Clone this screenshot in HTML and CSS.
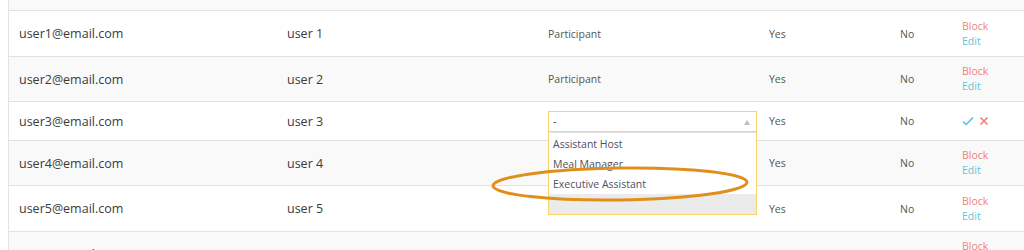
FILE: index.html
```html
<!DOCTYPE html>
<html lang="en">
<head>
    <meta charset="UTF-8">
    <title>Users</title>
    <link rel="stylesheet" href="styles.css">
</head>
<body>
    <div class="users-table">
        <div class="row row-alt">
            <div class="cell cell-email"></div>
            <div class="cell"></div>
            <div class="cell"></div>
            <div class="cell"></div>
            <div class="cell"></div>
            <div class="cell"></div>
        </div>

        <div class="row">
            <div class="cell cell-email">user1@email.com</div>
            <div class="cell cell-name">user 1</div>
            <div class="cell cell-small">Participant</div>
            <div class="cell cell-small">Yes</div>
            <div class="cell cell-small">No</div>
            <div class="cell cell-actions">
                <a class="link-block">Block</a>
                <a class="link-edit">Edit</a>
            </div>
        </div>

        <div class="row row-alt">
            <div class="cell cell-email">user2@email.com</div>
            <div class="cell cell-name">user 2</div>
            <div class="cell cell-small">Participant</div>
            <div class="cell cell-small">Yes</div>
            <div class="cell cell-small">No</div>
            <div class="cell cell-actions">
                <a class="link-block">Block</a>
                <a class="link-edit">Edit</a>
            </div>
        </div>

        <!-- row being edited -->
        <div class="row row-editing">
            <div class="cell cell-email">user3@email.com</div>
            <div class="cell cell-name">user 3</div>
            <div class="cell cell-small">
                <div class="role-select">
                    <div class="role-select-box">
                        <span>-</span>
                        <span class="role-select-arrow"></span>
                    </div>
                    <ul class="role-options">
                        <li>Assistant Host</li>
                        <li>Meal Manager</li>
                        <li>Executive Assistant</li>
                        <li class="active"></li>
                    </ul>
                </div>
            </div>
            <div class="cell cell-small">Yes</div>
            <div class="cell cell-small">No</div>
            <div class="cell cell-icons">
                <svg width="12" height="10" viewBox="0 0 12 10"><path d="M1 5.5 L4.2 8.5 L11 1.5" fill="none" stroke="#4fc3dc" stroke-width="1.6"/></svg>
                <svg width="10" height="10" viewBox="0 0 10 10"><path d="M1.5 1.5 L8.5 8.5 M8.5 1.5 L1.5 8.5" fill="none" stroke="#f47a7a" stroke-width="1.6"/></svg>
            </div>
        </div>

        <div class="row row-alt">
            <div class="cell cell-email">user4@email.com</div>
            <div class="cell cell-name">user 4</div>
            <div class="cell cell-small"></div>
            <div class="cell cell-small">Yes</div>
            <div class="cell cell-small">No</div>
            <div class="cell cell-actions">
                <a class="link-block">Block</a>
                <a class="link-edit">Edit</a>
            </div>
        </div>

        <div class="row">
            <div class="cell cell-email">user5@email.com</div>
            <div class="cell cell-name">user 5</div>
            <div class="cell cell-small"></div>
            <div class="cell cell-small">Yes</div>
            <div class="cell cell-small">No</div>
            <div class="cell cell-actions">
                <a class="link-block">Block</a>
                <a class="link-edit">Edit</a>
            </div>
        </div>

        <div class="row row-alt">
            <div class="cell cell-email">user6@email.com</div>
            <div class="cell cell-name">user 6</div>
            <div class="cell cell-small">Participant</div>
            <div class="cell cell-small">Yes</div>
            <div class="cell cell-small">No</div>
            <div class="cell cell-actions">
                <a class="link-block">Block</a>
                <a class="link-edit">Edit</a>
            </div>
        </div>
    </div>

    <!-- highlight drawn over the screenshot -->
    <svg class="highlight" width="270" height="44" viewBox="0 0 270 44">
        <ellipse cx="135" cy="22" rx="127" ry="16" fill="none" stroke="#e08f1c" stroke-width="3" transform="rotate(-0.8 135 22)"/>
    </svg>
</body>
</html>
```

FILE: styles.css
```css
body {
    margin: 0;
    font-family: "Open Sans", "Liberation Sans", sans-serif;
    background: #fff;
    overflow: hidden;
    position: relative;
    height: 250px;
}

/* --- Table --- */
.users-table {
    margin: -34px 0 0 8px;
    border-left: 1px solid #e3e3e3;
}

.row {
    display: grid;
    grid-template-columns: 268px 261px 221px 131px 62px 1fr;
    height: 45px;
    border-bottom: 1px solid #e2e2e2;
    background: #fff;
}

.row-alt {
    height: 44px;
    background: #f9f9f9;
}

.row-editing {
    height: 38px;
}

.cell {
    display: flex;
    flex-direction: column;
    justify-content: center;
    padding-left: 10px;
    font-size: 12.5px;
    color: #3b3b3b;
}

.cell-small {
    font-size: 10.5px;
    color: #555;
}

.cell-actions {
    font-size: 10.5px;
    line-height: 15px;
}

.link-block {
    color: #f27f7f;
}

.link-edit {
    color: #5cc5d8;
}

.cell-icons {
    flex-direction: row;
    align-items: center;
    justify-content: flex-start;
    gap: 5px;
}

/* --- Role dropdown --- */
.role-select {
    position: relative;
    width: 209px;
}

.role-select-box {
    display: flex;
    justify-content: space-between;
    align-items: center;
    height: 19px;
    padding: 0 6px 0 4px;
    border: 1px solid #f8d466;
    background: #fff;
    color: #444;
}

.role-select-arrow {
    width: 0;
    height: 0;
    border-left: 3.5px solid transparent;
    border-right: 3.5px solid transparent;
    border-bottom: 5px solid #bdbdbd;
    margin-top: 2px;
}

.role-options {
    position: absolute;
    top: 21px;
    left: 0;
    right: 0;
    margin: 0;
    padding: 1px 0 0;
    list-style: none;
    background: #fff;
    border: 1px solid #f8d466;
    border-top: 1px solid #e4e4e4;
    z-index: 5;
}

.role-options li {
    height: 20px;
    line-height: 20px;
    padding-left: 4px;
    color: #4f5060;
}

.role-options li.active {
    background: #ebebeb;
}

.highlight {
    position: absolute;
    left: 485px;
    top: 162px;
    z-index: 10;
}
```
